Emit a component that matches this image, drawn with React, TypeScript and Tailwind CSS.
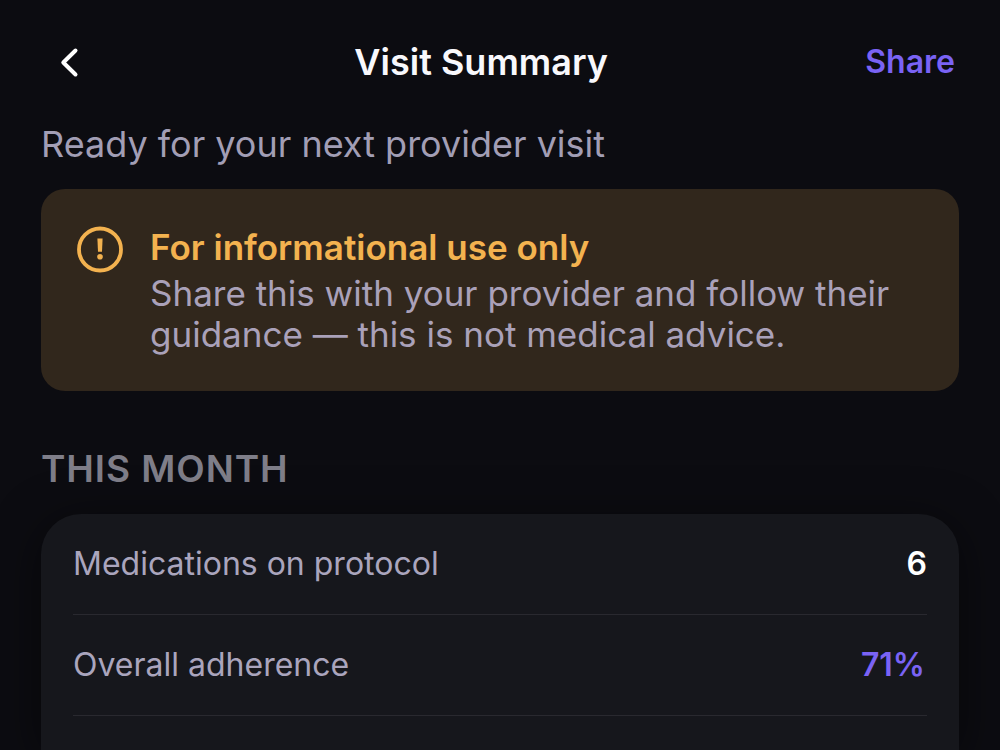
import clsx from 'clsx';

interface SummaryRow {
  label: string;
  value: string;
  accent?: boolean;
}

const monthRows: SummaryRow[] = [
  { label: 'Medications on protocol', value: '6' },
  { label: 'Overall adherence', value: '71%', accent: true },
];

const BackIcon = () => (
  <svg className="w-14 h-14" viewBox="0 0 56 56" fill="none" aria-hidden="true">
    <path
      d="M34.5 16.5 22.3 28.5 34.5 40.5"
      stroke="currentColor"
      strokeWidth="4"
      strokeLinecap="round"
      strokeLinejoin="round"
    />
  </svg>
);

const NoticeIcon = () => (
  <svg className="w-12 h-12 shrink-0" viewBox="0 0 48 48" fill="none" aria-hidden="true">
    <circle cx="23" cy="24.5" r="21" stroke="currentColor" strokeWidth="3.8" />
    <path d="M20.4 13.6h5.2l-.6 13.2h-4z" fill="currentColor" />
    <circle cx="23" cy="31.8" r="2.8" fill="currentColor" />
  </svg>
);

const Header = () => (
  <header className="flex items-center justify-between h-14">
    <button type="button" aria-label="Back" className="text-white cursor-pointer">
      <BackIcon />
    </button>
    <h1 className="text-4xl font-semibold text-[#f8f8fc]">Visit Summary</h1>
    <button type="button" className="pr-1 text-[32px] font-semibold text-[#7a63f5] cursor-pointer">
      Share
    </button>
  </header>
);

const Notice = () => (
  <section className="flex gap-[25px] mt-[23px] px-9 py-9 rounded-3xl bg-[#31271c] text-[#f3b24f]">
    <NoticeIcon />
    <div className="text-[35px]">
      <h2 className="font-semibold leading-11">For informational use only</h2>
      <p className="mt-1 leading-[41px] text-[#aaa1b9]">
        Share this with your provider and follow their guidance — this is not medical advice.
      </p>
    </div>
  </section>
);

const SummaryCard = ({ rows }: { rows: SummaryRow[] }) => (
  <dl className="grow px-8 mt-[23px] rounded-t-[40px] bg-[#16171c] shadow-[0_8px_48px_rgba(0,0,0,0.5)]">
    {rows.map((row) => (
      <div
        key={row.label}
        className="flex items-center justify-between h-[101px] border-b border-[#29292f] text-[32px]"
      >
        <dt className="text-[#aaa5bd]">{row.label}</dt>
        <dd className={clsx('font-semibold', row.accent ? 'pr-0.5 text-[#7a63f5]' : 'text-white')}>
          {row.value}
        </dd>
      </div>
    ))}
  </dl>
);

const App = () => {
  return (
    <div className="flex flex-col min-h-screen px-[41px] pt-[34px] overflow-hidden bg-[#0c0c11] font-['Inter',sans-serif]">
      <Header />
      <main className="flex flex-col grow">
        <p className="mt-8 text-4xl leading-11 text-[#a29eb5]">Ready for your next provider visit</p>
        <Notice />
        <h2 className="mt-14 text-[37px] leading-11 font-semibold tracking-wide text-[#7f7e89]">
          THIS MONTH
        </h2>
        <SummaryCard rows={monthRows} />
      </main>
    </div>
  );
};

export default App;
